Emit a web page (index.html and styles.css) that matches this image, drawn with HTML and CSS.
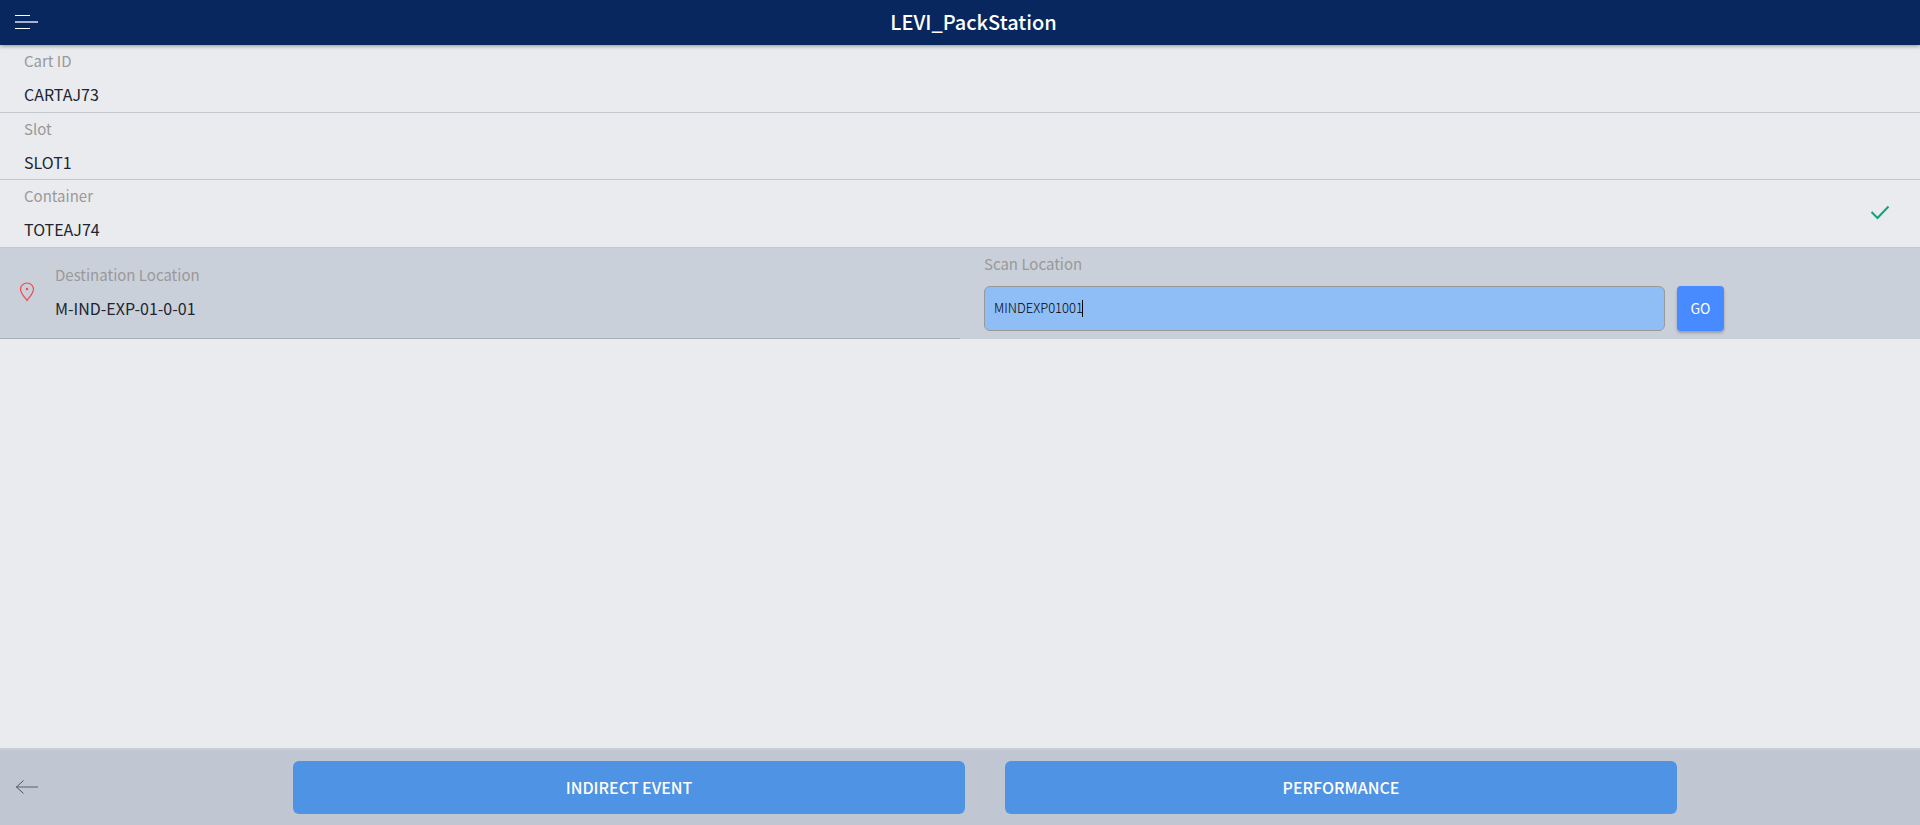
FILE: index.html
```html
<!DOCTYPE html>
<html lang="en">
<head>
<meta charset="utf-8">
<meta name="viewport" content="width=device-width, initial-scale=1">
<title>LEVI_PackStation</title>
<link rel="stylesheet" href="styles.css">
</head>
<body class="app">
<header class="topbar">
  <button class="icon-button" type="button" aria-label="Menu">
    <svg width="24" height="16" viewBox="0 0 24 16" fill="#fff" aria-hidden="true"><path d="M0 1h15v1H0zM0 14h15v1H0z"/><path d="M0 7h23v2H0z" opacity=".65"/></svg>
  </button>
  <h1 class="title">LEVI_PackStation</h1>
</header>
<main class="content">
  <section class="row">
    <div class="field"><div class="label">Cart ID</div><div class="value">CARTAJ73</div></div>
  </section>
  <section class="row row-short">
    <div class="field"><div class="label">Slot</div><div class="value">SLOT1</div></div>
  </section>
  <section class="row">
    <div class="field"><div class="label">Container</div><div class="value">TOTEAJ74</div></div>
    <svg class="check" width="20" height="16" viewBox="0 0 20 16" fill="none" stroke="#0fa37f" stroke-width="2" aria-hidden="true"><path d="M1.500 7l6 6L18.500 1.500"/></svg>
  </section>
  <section class="active">
    <div class="destination">
      <svg class="pin" width="16" height="20" viewBox="0 0 16 20" fill="none" stroke="#f04a50" stroke-width="1.2" aria-hidden="true"><path d="M8 18.500C6.500 16 1.500 11.500 1.500 7.200A6.500 6.200 0 0 1 14.500 7.200C14.500 11.500 9.500 16 8 18.500Z"/><circle cx="8" cy="7" r="1.200" fill="#f04a50" stroke="none"/></svg>
      <div class="field"><div class="label">Destination Location</div><div class="value">M-IND-EXP-01-0-01</div></div>
    </div>
    <form class="scan">
      <label class="label" for="location">Scan Location</label>
      <div class="entry">
        <div class="input-wrap">
          <input class="scan-input" id="location" type="text" value="MINDEXP01001" autocomplete="off" spellcheck="false">
          <span class="caret"></span>
        </div>
        <button class="go" type="button">GO</button>
      </div>
    </form>
  </section>
</main>
<footer class="footer">
  <button class="icon-button" type="button" aria-label="Back">
    <svg width="24" height="16" viewBox="0 0 24 16" fill="none" stroke="#505468" aria-hidden="true"><path d="M8.500 1.500L1.500 8l7 6.500"/><path d="M1 8h22" stroke-width="2" opacity=".45"/></svg>
  </button>
  <div class="actions">
    <button class="action" type="button">INDIRECT EVENT</button>
    <button class="action" type="button">PERFORMANCE</button>
  </div>
</footer>
</body>
</html>
```
FILE: styles.css
```css
*, *::before, *::after { box-sizing: border-box; }
.app {
  margin: 0;
  min-height: 100vh;
  display: flex;
  flex-direction: column;
  background: #e9ebee;
  color: #202430;
  font-family: "Noto Sans CJK SC", "Noto Sans", sans-serif;
  font-size: 16px;
  font-weight: 400;
}
button, input { font: inherit; }
.topbar {
  display: flex;
  align-items: center;
  height: 45px;
  padding: 0 12px 0 15px;
  background: #08275f;
  box-shadow: 0 1px 4px rgba(0, 0, 0, 0.4);
}
.title {
  flex: 1;
  margin: 0;
  color: #fff;
  font-size: 20px;
  font-weight: 500;
  line-height: 43px;
  padding-bottom: 2px;
  text-align: center;
}
.icon-button {
  display: flex;
  padding: 0 0 2px;
  border: 0;
  background: none;
}
.content { flex: 1; }
.row {
  display: flex;
  align-items: center;
  justify-content: space-between;
  padding: 0 30px 1px 24px;
  border-bottom: 1px solid #c5c8cf;
}
.row-short { padding-bottom: 0; }
.label { color: #999; font-size: 15px; line-height: 32px; }
.value { line-height: 34px; }
.active { display: grid; grid-template-columns: 1fr 1fr; background: #cad0da; }
.destination {
  display: flex;
  align-items: center;
  gap: 20px;
  padding: 0 19px 3px;
  border-bottom: 1px solid #aab0ba;
}
.scan { padding: 0 24px 8px; }
.scan .label { display: block; }
.entry { display: flex; gap: 12px; margin-top: 6px; }
.input-wrap { position: relative; width: calc(75% - 3px); }
.scan-input {
  display: block;
  width: 100%;
  height: 45px;
  padding: 0 9px 2px;
  border: 1px solid #999;
  border-radius: 6px;
  outline: 0;
  background: #8fbdf5;
  color: #000;
  font-size: 13px;
  font-weight: 300;
}
.caret {
  position: absolute;
  top: 14px;
  left: 98px;
  width: 1px;
  height: 17px;
  background: #000;
}
.go {
  width: 47px;
  height: 45px;
  padding: 0 0 2px;
  border: 0;
  border-radius: 4px;
  background: #488aff;
  color: #fff;
  font-size: 14px;
  box-shadow: 0 2px 3px rgba(0, 0, 0, 0.25);
}
.footer {
  display: flex;
  align-items: center;
  padding: 11px 15px;
  border-top: 2px solid #ccced1;
  background: #c0c6d2;
}
.actions { flex: 1; display: flex; gap: 40px; padding: 0 228px 0 254px; }
.action {
  flex: 1;
  height: 53px;
  padding: 0 0 2px;
  border: 0;
  border-radius: 6px;
  background: #4f93e4;
  color: #fff;
  font-size: 16px;
  font-weight: 500;
}
```
